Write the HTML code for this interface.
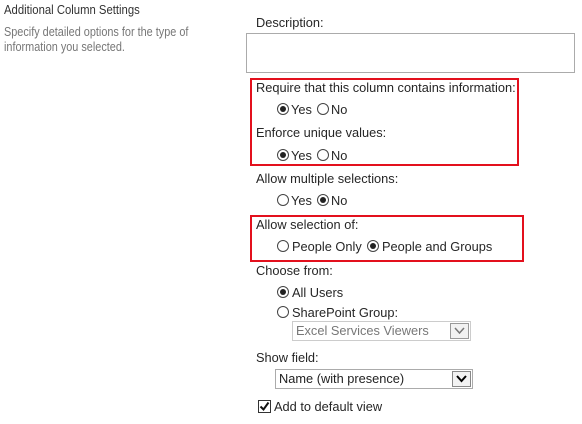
<!DOCTYPE html>
<html><head><style>
body{margin:0;width:582px;height:424px;background:#fff;position:relative;overflow:hidden;font-family:"Liberation Sans",sans-serif;font-size:12.8px;color:#262626}
.t{position:absolute;white-space:nowrap;line-height:16px}
.r{position:absolute;width:10px;height:10px;border:1px solid #444;border-radius:50%;background:#fff}
.r.on::after{content:"";position:absolute;left:2px;top:2px;width:6px;height:6px;border-radius:50%;background:#222}
.red{position:absolute;border:2px solid #e3101d}
.sel{position:absolute;border:1px solid #ababab;background:#fff}
.arr{position:absolute;right:1px;top:1px;width:17px;border:1px solid #888;background:#f2f2f2}
.sx{transform:scaleX(0.87);transform-origin:0 0}
</style></head><body>
<div class="t sx" style="left:4px;top:2px;color:#333;font-size:13px">Additional Column Settings</div>
<div class="t sx" style="left:4px;top:25px;color:#777;line-height:15px;font-size:12.5px">Specify detailed options for the type of<br>information you selected.</div>
<div class="t" style="left:256px;top:15px">Description:</div>
<div style="position:absolute;left:246px;top:33px;width:327px;height:38px;border:1px solid #ababab"></div>
<div class="red" style="left:250px;top:78px;width:265px;height:84px"></div>
<div class="t" style="left:256px;top:80px">Require that this column contains information:</div>
<div class="r on" style="left:277px;top:103px"></div><div class="t" style="left:291px;top:102px">Yes</div>
<div class="r" style="left:317px;top:103px"></div><div class="t" style="left:331px;top:102px">No</div>
<div class="t" style="left:256px;top:125px">Enforce unique values:</div>
<div class="r on" style="left:277px;top:149px"></div><div class="t" style="left:291px;top:148px">Yes</div>
<div class="r" style="left:317px;top:149px"></div><div class="t" style="left:331px;top:148px">No</div>
<div class="t" style="left:256px;top:171px">Allow multiple selections:</div>
<div class="r" style="left:277px;top:194px"></div><div class="t" style="left:291px;top:193px">Yes</div>
<div class="r on" style="left:317px;top:194px"></div><div class="t" style="left:331px;top:193px">No</div>
<div class="red" style="left:250px;top:215px;width:270px;height:43px"></div>
<div class="t" style="left:256px;top:217px">Allow selection of:</div>
<div class="r" style="left:277px;top:240px"></div><div class="t" style="left:292px;top:239px">People Only</div>
<div class="r on" style="left:367px;top:240px"></div><div class="t" style="left:382px;top:239px">People and Groups</div>
<div class="t" style="left:256px;top:263px">Choose from:</div>
<div class="r on" style="left:277px;top:286px"></div><div class="t" style="left:292px;top:285px">All Users</div>
<div class="r" style="left:277px;top:306px"></div><div class="t" style="left:292px;top:305px">SharePoint Group:</div>
<div class="sel" style="left:292px;top:321px;width:177px;height:18px;border-color:#ccc"><div class="t" style="left:3px;top:1px;color:#777">Excel Services Viewers</div>
<div class="arr" style="height:14px;border-color:#999"><svg width="17" height="14"><path d="M4 4 L8.5 9 L13 4" stroke="#777" stroke-width="1.5" fill="none"/></svg></div></div>
<div class="t" style="left:256px;top:350px">Show field:</div>
<div class="sel" style="left:275px;top:369px;width:196px;height:18px"><div class="t" style="left:3px;top:1px;color:#222">Name (with presence)</div>
<div class="arr" style="height:14px"><svg width="17" height="14"><path d="M4 4 L8.5 9 L13 4" stroke="#000" stroke-width="2" fill="none"/></svg></div></div>
<div style="position:absolute;left:258px;top:400px;width:11px;height:11px;border:1px solid #333;background:#fff"><svg width="11" height="11" style="position:absolute;left:0;top:0"><path d="M1.5 5.5 L4.5 8.5 L9.5 1.5" stroke="#111" stroke-width="2" fill="none"/></svg></div>
<div class="t" style="left:274px;top:399px">Add to default view</div>
</body></html>
